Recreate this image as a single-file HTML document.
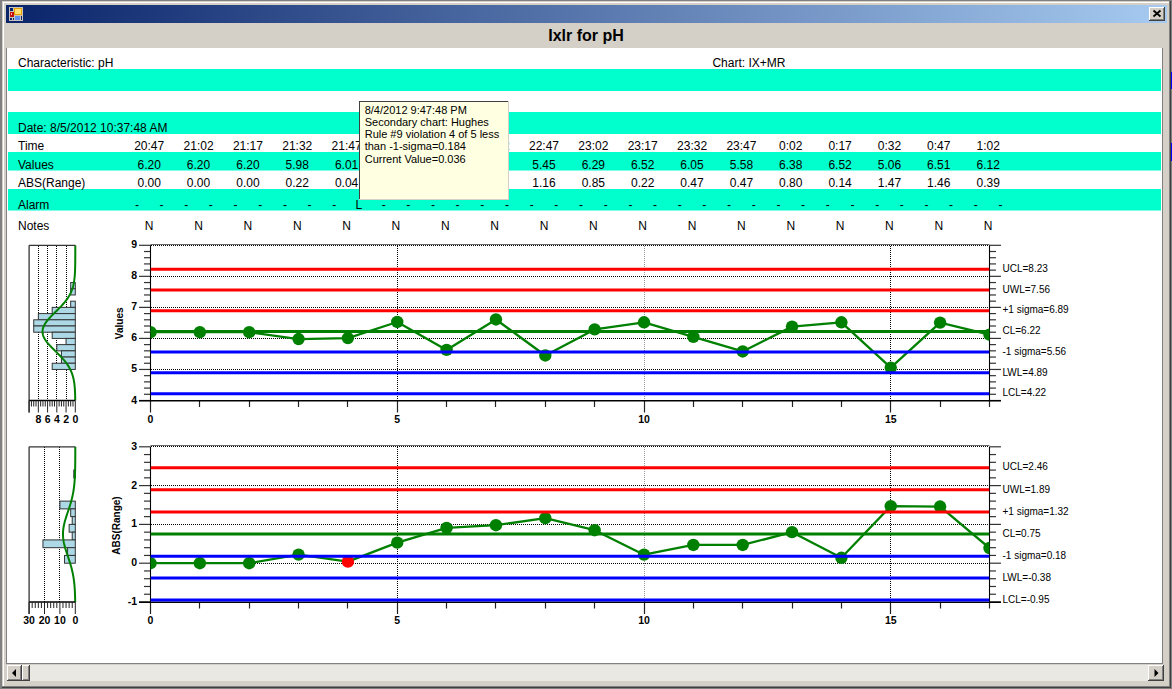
<!DOCTYPE html>
<html><head><meta charset="utf-8"><style>
html,body{margin:0;padding:0;width:1172px;height:689px;overflow:hidden;background:#d4d0c8;}
svg{display:block;}
text{font-family:"Liberation Sans", sans-serif;}
</style></head><body>
<svg width="1172" height="689" viewBox="0 0 1172 689">
<defs>
<linearGradient id="tg" x1="0" y1="0" x2="1" y2="0">
<stop offset="0" stop-color="#0a246a"/><stop offset="1" stop-color="#a6caf0"/>
</linearGradient>
<pattern id="chk" width="2" height="2" patternUnits="userSpaceOnUse">
<rect width="2" height="2" fill="#d4d0c8"/><rect width="1" height="1" fill="#fff"/><rect x="1" y="1" width="1" height="1" fill="#fff"/>
</pattern>
<clipPath id="c1"><rect x="150.5" y="237.3" width="838.95" height="171.2"/></clipPath>
<clipPath id="c2"><rect x="150.5" y="438.80000000000007" width="838.95" height="171.19999999999993"/></clipPath>
</defs>

<rect x="0" y="0" width="1172" height="689" fill="#d4d0c8"/>
<rect x="0" y="0" width="1172" height="689" fill="#808080"/>
<rect x="2" y="1" width="1169" height="687" fill="#404040"/>
<rect x="2" y="1" width="1168" height="686" fill="#808080"/>
<rect x="2" y="1" width="1167" height="685" fill="#d4d0c8"/>
<rect x="3" y="2" width="1166" height="684" fill="#ffffff"/>
<rect x="4" y="3" width="1165" height="683" fill="#d4d0c8"/>
<rect x="1171" y="72" width="1" height="17" fill="#0000ff"/>
<rect x="1171" y="143" width="1" height="18" fill="#0000ff"/>
<rect x="6" y="5" width="1161" height="18" fill="url(#tg)"/>
<g>
<rect x="9" y="7" width="14" height="14" fill="#c8c4bc"/>
<rect x="10" y="8" width="3" height="3" fill="#0a246a"/>
<rect x="14" y="8" width="8" height="7" fill="#e8a000"/>
<rect x="15" y="9" width="6" height="5" fill="#ffe070"/>
<rect x="10" y="12" width="4" height="5" fill="#c01010"/>
<rect x="11" y="13" width="1" height="2" fill="#ffb0b0"/>
<rect x="15" y="16" width="5" height="4" fill="#6090f0"/>
<rect x="10" y="18" width="2" height="2" fill="#0a246a"/>
<rect x="13" y="18" width="1" height="2" fill="#0a246a"/>
<rect x="21" y="16" width="1" height="4" fill="#0a246a"/>
</g>
<g>
<rect x="1149" y="7" width="16" height="14" fill="#404040"/>
<rect x="1149" y="7" width="15" height="13" fill="#ffffff"/>
<rect x="1150" y="8" width="14" height="12" fill="#808080"/>
<rect x="1150" y="8" width="13" height="11" fill="#d4d0c8"/>
<path d="M1153.5 10.5 L1160.5 16.5 M1160.5 10.5 L1153.5 16.5" stroke="#000" stroke-width="1.8" fill="none"/>
</g>
<text x="586" y="40.6" text-anchor="middle" font-size="16" font-weight="bold" fill="#000">Ixlr for pH</text>
<rect x="6" y="48" width="1157" height="616" fill="#808080"/>
<rect x="7" y="48" width="1155" height="615" fill="#ffffff"/>
<rect x="8" y="69" width="1153" height="22" fill="#00ffcc"/>
<rect x="8" y="112" width="1153" height="22" fill="#00ffcc"/>
<rect x="8" y="152" width="1153" height="18.5" fill="#00ffcc"/>
<rect x="8" y="189" width="1153" height="21.5" fill="#00ffcc"/>
<text x="18" y="66.8" font-size="12" text-anchor="start" font-weight="normal" fill="#000" >Characteristic: pH</text>
<text x="712.4" y="66.5" font-size="12" text-anchor="start" font-weight="normal" fill="#000" >Chart: IX+MR</text>
<text x="18" y="132" font-size="12" text-anchor="start" font-weight="normal" fill="#000" >Date: 8/5/2012 10:37:48 AM</text>
<text x="18" y="150" font-size="12" text-anchor="start" font-weight="normal" fill="#000" >Time</text>
<text x="18" y="169" font-size="12" text-anchor="start" font-weight="normal" fill="#000" >Values</text>
<text x="18" y="187" font-size="12" text-anchor="start" font-weight="normal" fill="#000" >ABS(Range)</text>
<text x="18" y="208.7" font-size="12" text-anchor="start" font-weight="normal" fill="#000" >Alarm</text>
<text x="18" y="229.6" font-size="12" text-anchor="start" font-weight="normal" fill="#000" >Notes</text>
<text x="149.2" y="150" font-size="12" text-anchor="middle" font-weight="normal" fill="#000" >20:47</text>
<text x="149.2" y="169" font-size="12" text-anchor="middle" font-weight="normal" fill="#000" >6.20</text>
<text x="149.2" y="187" font-size="12" text-anchor="middle" font-weight="normal" fill="#000" >0.00</text>
<text x="136.89999999999998" y="208.8" font-size="12" text-anchor="middle" font-weight="normal" fill="#000" >-</text>
<text x="161.5" y="208.8" font-size="12" text-anchor="middle" font-weight="normal" fill="#000" >-</text>
<text x="149.2" y="229.6" font-size="12" text-anchor="middle" font-weight="normal" fill="#000" >N</text>
<text x="198.54999999999998" y="150" font-size="12" text-anchor="middle" font-weight="normal" fill="#000" >21:02</text>
<text x="198.54999999999998" y="169" font-size="12" text-anchor="middle" font-weight="normal" fill="#000" >6.20</text>
<text x="198.54999999999998" y="187" font-size="12" text-anchor="middle" font-weight="normal" fill="#000" >0.00</text>
<text x="186.24999999999997" y="208.8" font-size="12" text-anchor="middle" font-weight="normal" fill="#000" >-</text>
<text x="210.85" y="208.8" font-size="12" text-anchor="middle" font-weight="normal" fill="#000" >-</text>
<text x="198.54999999999998" y="229.6" font-size="12" text-anchor="middle" font-weight="normal" fill="#000" >N</text>
<text x="247.89999999999998" y="150" font-size="12" text-anchor="middle" font-weight="normal" fill="#000" >21:17</text>
<text x="247.89999999999998" y="169" font-size="12" text-anchor="middle" font-weight="normal" fill="#000" >6.20</text>
<text x="247.89999999999998" y="187" font-size="12" text-anchor="middle" font-weight="normal" fill="#000" >0.00</text>
<text x="235.59999999999997" y="208.8" font-size="12" text-anchor="middle" font-weight="normal" fill="#000" >-</text>
<text x="260.2" y="208.8" font-size="12" text-anchor="middle" font-weight="normal" fill="#000" >-</text>
<text x="247.89999999999998" y="229.6" font-size="12" text-anchor="middle" font-weight="normal" fill="#000" >N</text>
<text x="297.25" y="150" font-size="12" text-anchor="middle" font-weight="normal" fill="#000" >21:32</text>
<text x="297.25" y="169" font-size="12" text-anchor="middle" font-weight="normal" fill="#000" >5.98</text>
<text x="297.25" y="187" font-size="12" text-anchor="middle" font-weight="normal" fill="#000" >0.22</text>
<text x="284.95" y="208.8" font-size="12" text-anchor="middle" font-weight="normal" fill="#000" >-</text>
<text x="309.55" y="208.8" font-size="12" text-anchor="middle" font-weight="normal" fill="#000" >-</text>
<text x="297.25" y="229.6" font-size="12" text-anchor="middle" font-weight="normal" fill="#000" >N</text>
<text x="346.59999999999997" y="150" font-size="12" text-anchor="middle" font-weight="normal" fill="#000" >21:47</text>
<text x="346.59999999999997" y="169" font-size="12" text-anchor="middle" font-weight="normal" fill="#000" >6.01</text>
<text x="346.59999999999997" y="187" font-size="12" text-anchor="middle" font-weight="normal" fill="#000" >0.04</text>
<text x="334.29999999999995" y="208.8" font-size="12" text-anchor="middle" font-weight="normal" fill="#000" >-</text>
<text x="358.9" y="208.8" font-size="12" text-anchor="middle" font-weight="normal" fill="#000" >L</text>
<text x="346.59999999999997" y="229.6" font-size="12" text-anchor="middle" font-weight="normal" fill="#000" >N</text>
<text x="395.95" y="150" font-size="12" text-anchor="middle" font-weight="normal" fill="#000" >22:02</text>
<text x="395.95" y="169" font-size="12" text-anchor="middle" font-weight="normal" fill="#000" >6.53</text>
<text x="395.95" y="187" font-size="12" text-anchor="middle" font-weight="normal" fill="#000" >0.53</text>
<text x="383.65" y="208.8" font-size="12" text-anchor="middle" font-weight="normal" fill="#000" >-</text>
<text x="408.25" y="208.8" font-size="12" text-anchor="middle" font-weight="normal" fill="#000" >-</text>
<text x="395.95" y="229.6" font-size="12" text-anchor="middle" font-weight="normal" fill="#000" >N</text>
<text x="445.3" y="150" font-size="12" text-anchor="middle" font-weight="normal" fill="#000" >22:17</text>
<text x="445.3" y="169" font-size="12" text-anchor="middle" font-weight="normal" fill="#000" >5.63</text>
<text x="445.3" y="187" font-size="12" text-anchor="middle" font-weight="normal" fill="#000" >0.91</text>
<text x="433.0" y="208.8" font-size="12" text-anchor="middle" font-weight="normal" fill="#000" >-</text>
<text x="457.6" y="208.8" font-size="12" text-anchor="middle" font-weight="normal" fill="#000" >-</text>
<text x="445.3" y="229.6" font-size="12" text-anchor="middle" font-weight="normal" fill="#000" >N</text>
<text x="494.65" y="150" font-size="12" text-anchor="middle" font-weight="normal" fill="#000" >22:32</text>
<text x="494.65" y="169" font-size="12" text-anchor="middle" font-weight="normal" fill="#000" >6.61</text>
<text x="494.65" y="187" font-size="12" text-anchor="middle" font-weight="normal" fill="#000" >0.98</text>
<text x="482.34999999999997" y="208.8" font-size="12" text-anchor="middle" font-weight="normal" fill="#000" >-</text>
<text x="506.95" y="208.8" font-size="12" text-anchor="middle" font-weight="normal" fill="#000" >-</text>
<text x="494.65" y="229.6" font-size="12" text-anchor="middle" font-weight="normal" fill="#000" >N</text>
<text x="544.0" y="150" font-size="12" text-anchor="middle" font-weight="normal" fill="#000" >22:47</text>
<text x="544.0" y="169" font-size="12" text-anchor="middle" font-weight="normal" fill="#000" >5.45</text>
<text x="544.0" y="187" font-size="12" text-anchor="middle" font-weight="normal" fill="#000" >1.16</text>
<text x="531.7" y="208.8" font-size="12" text-anchor="middle" font-weight="normal" fill="#000" >-</text>
<text x="556.3" y="208.8" font-size="12" text-anchor="middle" font-weight="normal" fill="#000" >-</text>
<text x="544.0" y="229.6" font-size="12" text-anchor="middle" font-weight="normal" fill="#000" >N</text>
<text x="593.3500000000001" y="150" font-size="12" text-anchor="middle" font-weight="normal" fill="#000" >23:02</text>
<text x="593.3500000000001" y="169" font-size="12" text-anchor="middle" font-weight="normal" fill="#000" >6.29</text>
<text x="593.3500000000001" y="187" font-size="12" text-anchor="middle" font-weight="normal" fill="#000" >0.85</text>
<text x="581.0500000000002" y="208.8" font-size="12" text-anchor="middle" font-weight="normal" fill="#000" >-</text>
<text x="605.6500000000001" y="208.8" font-size="12" text-anchor="middle" font-weight="normal" fill="#000" >-</text>
<text x="593.3500000000001" y="229.6" font-size="12" text-anchor="middle" font-weight="normal" fill="#000" >N</text>
<text x="642.7" y="150" font-size="12" text-anchor="middle" font-weight="normal" fill="#000" >23:17</text>
<text x="642.7" y="169" font-size="12" text-anchor="middle" font-weight="normal" fill="#000" >6.52</text>
<text x="642.7" y="187" font-size="12" text-anchor="middle" font-weight="normal" fill="#000" >0.22</text>
<text x="630.4000000000001" y="208.8" font-size="12" text-anchor="middle" font-weight="normal" fill="#000" >-</text>
<text x="655.0" y="208.8" font-size="12" text-anchor="middle" font-weight="normal" fill="#000" >-</text>
<text x="642.7" y="229.6" font-size="12" text-anchor="middle" font-weight="normal" fill="#000" >N</text>
<text x="692.0500000000001" y="150" font-size="12" text-anchor="middle" font-weight="normal" fill="#000" >23:32</text>
<text x="692.0500000000001" y="169" font-size="12" text-anchor="middle" font-weight="normal" fill="#000" >6.05</text>
<text x="692.0500000000001" y="187" font-size="12" text-anchor="middle" font-weight="normal" fill="#000" >0.47</text>
<text x="679.7500000000001" y="208.8" font-size="12" text-anchor="middle" font-weight="normal" fill="#000" >-</text>
<text x="704.35" y="208.8" font-size="12" text-anchor="middle" font-weight="normal" fill="#000" >-</text>
<text x="692.0500000000001" y="229.6" font-size="12" text-anchor="middle" font-weight="normal" fill="#000" >N</text>
<text x="741.4000000000001" y="150" font-size="12" text-anchor="middle" font-weight="normal" fill="#000" >23:47</text>
<text x="741.4000000000001" y="169" font-size="12" text-anchor="middle" font-weight="normal" fill="#000" >5.58</text>
<text x="741.4000000000001" y="187" font-size="12" text-anchor="middle" font-weight="normal" fill="#000" >0.47</text>
<text x="729.1000000000001" y="208.8" font-size="12" text-anchor="middle" font-weight="normal" fill="#000" >-</text>
<text x="753.7" y="208.8" font-size="12" text-anchor="middle" font-weight="normal" fill="#000" >-</text>
<text x="741.4000000000001" y="229.6" font-size="12" text-anchor="middle" font-weight="normal" fill="#000" >N</text>
<text x="790.7500000000001" y="150" font-size="12" text-anchor="middle" font-weight="normal" fill="#000" >0:02</text>
<text x="790.7500000000001" y="169" font-size="12" text-anchor="middle" font-weight="normal" fill="#000" >6.38</text>
<text x="790.7500000000001" y="187" font-size="12" text-anchor="middle" font-weight="normal" fill="#000" >0.80</text>
<text x="778.4500000000002" y="208.8" font-size="12" text-anchor="middle" font-weight="normal" fill="#000" >-</text>
<text x="803.0500000000001" y="208.8" font-size="12" text-anchor="middle" font-weight="normal" fill="#000" >-</text>
<text x="790.7500000000001" y="229.6" font-size="12" text-anchor="middle" font-weight="normal" fill="#000" >N</text>
<text x="840.1" y="150" font-size="12" text-anchor="middle" font-weight="normal" fill="#000" >0:17</text>
<text x="840.1" y="169" font-size="12" text-anchor="middle" font-weight="normal" fill="#000" >6.52</text>
<text x="840.1" y="187" font-size="12" text-anchor="middle" font-weight="normal" fill="#000" >0.14</text>
<text x="827.8000000000001" y="208.8" font-size="12" text-anchor="middle" font-weight="normal" fill="#000" >-</text>
<text x="852.4" y="208.8" font-size="12" text-anchor="middle" font-weight="normal" fill="#000" >-</text>
<text x="840.1" y="229.6" font-size="12" text-anchor="middle" font-weight="normal" fill="#000" >N</text>
<text x="889.45" y="150" font-size="12" text-anchor="middle" font-weight="normal" fill="#000" >0:32</text>
<text x="889.45" y="169" font-size="12" text-anchor="middle" font-weight="normal" fill="#000" >5.06</text>
<text x="889.45" y="187" font-size="12" text-anchor="middle" font-weight="normal" fill="#000" >1.47</text>
<text x="877.1500000000001" y="208.8" font-size="12" text-anchor="middle" font-weight="normal" fill="#000" >-</text>
<text x="901.75" y="208.8" font-size="12" text-anchor="middle" font-weight="normal" fill="#000" >-</text>
<text x="889.45" y="229.6" font-size="12" text-anchor="middle" font-weight="normal" fill="#000" >N</text>
<text x="938.8000000000001" y="150" font-size="12" text-anchor="middle" font-weight="normal" fill="#000" >0:47</text>
<text x="938.8000000000001" y="169" font-size="12" text-anchor="middle" font-weight="normal" fill="#000" >6.51</text>
<text x="938.8000000000001" y="187" font-size="12" text-anchor="middle" font-weight="normal" fill="#000" >1.46</text>
<text x="926.5000000000001" y="208.8" font-size="12" text-anchor="middle" font-weight="normal" fill="#000" >-</text>
<text x="951.1" y="208.8" font-size="12" text-anchor="middle" font-weight="normal" fill="#000" >-</text>
<text x="938.8000000000001" y="229.6" font-size="12" text-anchor="middle" font-weight="normal" fill="#000" >N</text>
<text x="988.1500000000001" y="150" font-size="12" text-anchor="middle" font-weight="normal" fill="#000" >1:02</text>
<text x="988.1500000000001" y="169" font-size="12" text-anchor="middle" font-weight="normal" fill="#000" >6.12</text>
<text x="988.1500000000001" y="187" font-size="12" text-anchor="middle" font-weight="normal" fill="#000" >0.39</text>
<text x="975.8500000000001" y="208.8" font-size="12" text-anchor="middle" font-weight="normal" fill="#000" >-</text>
<text x="1000.45" y="208.8" font-size="12" text-anchor="middle" font-weight="normal" fill="#000" >-</text>
<text x="988.1500000000001" y="229.6" font-size="12" text-anchor="middle" font-weight="normal" fill="#000" >N</text>
<line x1="151" y1="369.5" x2="989" y2="369.5" stroke="#000" stroke-width="1" stroke-dasharray="1,1"/>
<line x1="151" y1="338.5" x2="989" y2="338.5" stroke="#000" stroke-width="1" stroke-dasharray="1,1"/>
<line x1="151" y1="307.5" x2="989" y2="307.5" stroke="#000" stroke-width="1" stroke-dasharray="1,1"/>
<line x1="151" y1="276.5" x2="989" y2="276.5" stroke="#000" stroke-width="1" stroke-dasharray="1,1"/>
<line x1="151" y1="245.5" x2="989" y2="245.5" stroke="#000" stroke-width="1" stroke-dasharray="1,1"/>
<line x1="150.5" y1="244.5" x2="989.45" y2="244.5" stroke="#666" stroke-width="1"/>
<line x1="397.5" y1="246" x2="397.5" y2="400" stroke="#000" stroke-width="1" stroke-dasharray="1,1"/>
<line x1="644.5" y1="246" x2="644.5" y2="400" stroke="#999" stroke-width="1" stroke-dasharray="1,1"/>
<line x1="890.5" y1="246" x2="890.5" y2="400" stroke="#000" stroke-width="1" stroke-dasharray="1,1"/>
<line x1="139.0" y1="400.5" x2="150.5" y2="400.5" stroke="#333" stroke-width="1.2"/>
<line x1="989.45" y1="400.5" x2="1000.95" y2="400.5" stroke="#333" stroke-width="1.2"/>
<line x1="144.0" y1="394.292" x2="150.5" y2="394.292" stroke="#333" stroke-width="1.2"/>
<line x1="989.45" y1="394.292" x2="995.95" y2="394.292" stroke="#333" stroke-width="1.2"/>
<line x1="144.0" y1="388.084" x2="150.5" y2="388.084" stroke="#333" stroke-width="1.2"/>
<line x1="989.45" y1="388.084" x2="995.95" y2="388.084" stroke="#333" stroke-width="1.2"/>
<line x1="144.0" y1="381.87600000000003" x2="150.5" y2="381.87600000000003" stroke="#333" stroke-width="1.2"/>
<line x1="989.45" y1="381.87600000000003" x2="995.95" y2="381.87600000000003" stroke="#333" stroke-width="1.2"/>
<line x1="144.0" y1="375.668" x2="150.5" y2="375.668" stroke="#333" stroke-width="1.2"/>
<line x1="989.45" y1="375.668" x2="995.95" y2="375.668" stroke="#333" stroke-width="1.2"/>
<line x1="139.0" y1="369.46" x2="150.5" y2="369.46" stroke="#333" stroke-width="1.2"/>
<line x1="989.45" y1="369.46" x2="1000.95" y2="369.46" stroke="#333" stroke-width="1.2"/>
<line x1="144.0" y1="363.252" x2="150.5" y2="363.252" stroke="#333" stroke-width="1.2"/>
<line x1="989.45" y1="363.252" x2="995.95" y2="363.252" stroke="#333" stroke-width="1.2"/>
<line x1="144.0" y1="357.044" x2="150.5" y2="357.044" stroke="#333" stroke-width="1.2"/>
<line x1="989.45" y1="357.044" x2="995.95" y2="357.044" stroke="#333" stroke-width="1.2"/>
<line x1="144.0" y1="350.836" x2="150.5" y2="350.836" stroke="#333" stroke-width="1.2"/>
<line x1="989.45" y1="350.836" x2="995.95" y2="350.836" stroke="#333" stroke-width="1.2"/>
<line x1="144.0" y1="344.628" x2="150.5" y2="344.628" stroke="#333" stroke-width="1.2"/>
<line x1="989.45" y1="344.628" x2="995.95" y2="344.628" stroke="#333" stroke-width="1.2"/>
<line x1="139.0" y1="338.42" x2="150.5" y2="338.42" stroke="#333" stroke-width="1.2"/>
<line x1="989.45" y1="338.42" x2="1000.95" y2="338.42" stroke="#333" stroke-width="1.2"/>
<line x1="144.0" y1="332.212" x2="150.5" y2="332.212" stroke="#333" stroke-width="1.2"/>
<line x1="989.45" y1="332.212" x2="995.95" y2="332.212" stroke="#333" stroke-width="1.2"/>
<line x1="144.0" y1="326.004" x2="150.5" y2="326.004" stroke="#333" stroke-width="1.2"/>
<line x1="989.45" y1="326.004" x2="995.95" y2="326.004" stroke="#333" stroke-width="1.2"/>
<line x1="144.0" y1="319.796" x2="150.5" y2="319.796" stroke="#333" stroke-width="1.2"/>
<line x1="989.45" y1="319.796" x2="995.95" y2="319.796" stroke="#333" stroke-width="1.2"/>
<line x1="144.0" y1="313.58799999999997" x2="150.5" y2="313.58799999999997" stroke="#333" stroke-width="1.2"/>
<line x1="989.45" y1="313.58799999999997" x2="995.95" y2="313.58799999999997" stroke="#333" stroke-width="1.2"/>
<line x1="139.0" y1="307.38" x2="150.5" y2="307.38" stroke="#333" stroke-width="1.2"/>
<line x1="989.45" y1="307.38" x2="1000.95" y2="307.38" stroke="#333" stroke-width="1.2"/>
<line x1="144.0" y1="301.172" x2="150.5" y2="301.172" stroke="#333" stroke-width="1.2"/>
<line x1="989.45" y1="301.172" x2="995.95" y2="301.172" stroke="#333" stroke-width="1.2"/>
<line x1="144.0" y1="294.964" x2="150.5" y2="294.964" stroke="#333" stroke-width="1.2"/>
<line x1="989.45" y1="294.964" x2="995.95" y2="294.964" stroke="#333" stroke-width="1.2"/>
<line x1="144.0" y1="288.75600000000003" x2="150.5" y2="288.75600000000003" stroke="#333" stroke-width="1.2"/>
<line x1="989.45" y1="288.75600000000003" x2="995.95" y2="288.75600000000003" stroke="#333" stroke-width="1.2"/>
<line x1="144.0" y1="282.548" x2="150.5" y2="282.548" stroke="#333" stroke-width="1.2"/>
<line x1="989.45" y1="282.548" x2="995.95" y2="282.548" stroke="#333" stroke-width="1.2"/>
<line x1="139.0" y1="276.34000000000003" x2="150.5" y2="276.34000000000003" stroke="#333" stroke-width="1.2"/>
<line x1="989.45" y1="276.34000000000003" x2="1000.95" y2="276.34000000000003" stroke="#333" stroke-width="1.2"/>
<line x1="144.0" y1="270.13200000000006" x2="150.5" y2="270.13200000000006" stroke="#333" stroke-width="1.2"/>
<line x1="989.45" y1="270.13200000000006" x2="995.95" y2="270.13200000000006" stroke="#333" stroke-width="1.2"/>
<line x1="144.0" y1="263.924" x2="150.5" y2="263.924" stroke="#333" stroke-width="1.2"/>
<line x1="989.45" y1="263.924" x2="995.95" y2="263.924" stroke="#333" stroke-width="1.2"/>
<line x1="144.0" y1="257.71599999999995" x2="150.5" y2="257.71599999999995" stroke="#333" stroke-width="1.2"/>
<line x1="989.45" y1="257.71599999999995" x2="995.95" y2="257.71599999999995" stroke="#333" stroke-width="1.2"/>
<line x1="144.0" y1="251.50799999999998" x2="150.5" y2="251.50799999999998" stroke="#333" stroke-width="1.2"/>
<line x1="989.45" y1="251.50799999999998" x2="995.95" y2="251.50799999999998" stroke="#333" stroke-width="1.2"/>
<line x1="139.0" y1="245.3" x2="150.5" y2="245.3" stroke="#333" stroke-width="1.2"/>
<line x1="989.45" y1="245.3" x2="1000.95" y2="245.3" stroke="#333" stroke-width="1.2"/>
<line x1="150.5" y1="400.5" x2="150.5" y2="412.5" stroke="#222" stroke-width="1.2"/>
<line x1="199.5" y1="400.5" x2="199.5" y2="407.0" stroke="#222" stroke-width="1.2"/>
<line x1="249.5" y1="400.5" x2="249.5" y2="407.0" stroke="#222" stroke-width="1.2"/>
<line x1="298.5" y1="400.5" x2="298.5" y2="407.0" stroke="#222" stroke-width="1.2"/>
<line x1="347.5" y1="400.5" x2="347.5" y2="407.0" stroke="#222" stroke-width="1.2"/>
<line x1="397.5" y1="400.5" x2="397.5" y2="412.5" stroke="#222" stroke-width="1.2"/>
<line x1="446.5" y1="400.5" x2="446.5" y2="407.0" stroke="#222" stroke-width="1.2"/>
<line x1="495.5" y1="400.5" x2="495.5" y2="407.0" stroke="#222" stroke-width="1.2"/>
<line x1="545.5" y1="400.5" x2="545.5" y2="407.0" stroke="#222" stroke-width="1.2"/>
<line x1="594.5" y1="400.5" x2="594.5" y2="407.0" stroke="#222" stroke-width="1.2"/>
<line x1="644.5" y1="400.5" x2="644.5" y2="412.5" stroke="#222" stroke-width="1.2"/>
<line x1="693.5" y1="400.5" x2="693.5" y2="407.0" stroke="#222" stroke-width="1.2"/>
<line x1="742.5" y1="400.5" x2="742.5" y2="407.0" stroke="#222" stroke-width="1.2"/>
<line x1="792.5" y1="400.5" x2="792.5" y2="407.0" stroke="#222" stroke-width="1.2"/>
<line x1="841.5" y1="400.5" x2="841.5" y2="407.0" stroke="#222" stroke-width="1.2"/>
<line x1="890.5" y1="400.5" x2="890.5" y2="412.5" stroke="#222" stroke-width="1.2"/>
<line x1="940.5" y1="400.5" x2="940.5" y2="407.0" stroke="#222" stroke-width="1.2"/>
<line x1="989.5" y1="400.5" x2="989.5" y2="407.0" stroke="#222" stroke-width="1.2"/>
<line x1="150.5" y1="245.3" x2="150.5" y2="400.5" stroke="#000" stroke-width="1.1"/>
<line x1="989.5" y1="245.3" x2="989.5" y2="400.5" stroke="#000" stroke-width="1.1"/>
<line x1="139.0" y1="400.7" x2="1000.95" y2="400.7" stroke="#000" stroke-width="1.5"/>
<g clip-path="url(#c1)">
<polyline points="150.50,332.21 199.85,332.21 249.20,332.21 298.55,339.04 347.90,338.11 397.25,321.97 446.60,349.90 495.95,319.49 545.30,355.49 594.65,329.42 644.00,322.28 693.35,336.87 742.70,351.46 792.05,326.62 841.40,322.28 890.75,367.60 940.10,322.59 989.45,334.70" fill="none" stroke="#008000" stroke-width="2.3" stroke-linejoin="round"/>
<circle cx="150.50" cy="332.21" r="6.2" fill="#008000"/>
<circle cx="199.85" cy="332.21" r="6.2" fill="#008000"/>
<circle cx="249.20" cy="332.21" r="6.2" fill="#008000"/>
<circle cx="298.55" cy="339.04" r="6.2" fill="#008000"/>
<circle cx="347.90" cy="338.11" r="6.2" fill="#008000"/>
<circle cx="397.25" cy="321.97" r="6.2" fill="#008000"/>
<circle cx="446.60" cy="349.90" r="6.2" fill="#008000"/>
<circle cx="495.95" cy="319.49" r="6.2" fill="#008000"/>
<circle cx="545.30" cy="355.49" r="6.2" fill="#008000"/>
<circle cx="594.65" cy="329.42" r="6.2" fill="#008000"/>
<circle cx="644.00" cy="322.28" r="6.2" fill="#008000"/>
<circle cx="693.35" cy="336.87" r="6.2" fill="#008000"/>
<circle cx="742.70" cy="351.46" r="6.2" fill="#008000"/>
<circle cx="792.05" cy="326.62" r="6.2" fill="#008000"/>
<circle cx="841.40" cy="322.28" r="6.2" fill="#008000"/>
<circle cx="890.75" cy="367.60" r="6.2" fill="#008000"/>
<circle cx="940.10" cy="322.59" r="6.2" fill="#008000"/>
<circle cx="989.45" cy="334.70" r="6.2" fill="#008000"/>
<line x1="150.5" y1="269.20" x2="989.45" y2="269.20" stroke="#ff0000" stroke-width="3"/>
<line x1="150.5" y1="290.00" x2="989.45" y2="290.00" stroke="#ff0000" stroke-width="3"/>
<line x1="150.5" y1="310.79" x2="989.45" y2="310.79" stroke="#ff0000" stroke-width="3"/>
<line x1="150.5" y1="331.59" x2="989.45" y2="331.59" stroke="#008000" stroke-width="3"/>
<line x1="150.5" y1="352.08" x2="989.45" y2="352.08" stroke="#0000ff" stroke-width="3"/>
<line x1="150.5" y1="372.87" x2="989.45" y2="372.87" stroke="#0000ff" stroke-width="3"/>
<line x1="150.5" y1="393.67" x2="989.45" y2="393.67" stroke="#0000ff" stroke-width="3"/>
</g>
<text x="1002.5" y="271.90079999999995" font-size="10" text-anchor="start" font-weight="normal" fill="#000" >UCL=8.23</text>
<text x="1002.5" y="292.6976" font-size="10" text-anchor="start" font-weight="normal" fill="#000" >UWL=7.56</text>
<text x="1002.5" y="313.4944" font-size="10" text-anchor="start" font-weight="normal" fill="#000" >+1 sigma=6.89</text>
<text x="1002.5" y="334.2912" font-size="10" text-anchor="start" font-weight="normal" fill="#000" >CL=6.22</text>
<text x="1002.5" y="354.7776" font-size="10" text-anchor="start" font-weight="normal" fill="#000" >-1 sigma=5.56</text>
<text x="1002.5" y="375.5744" font-size="10" text-anchor="start" font-weight="normal" fill="#000" >LWL=4.89</text>
<text x="1002.5" y="396.3712" font-size="10" text-anchor="start" font-weight="normal" fill="#000" >LCL=4.22</text>
<text x="137" y="403.5" font-size="10.5" text-anchor="end" font-weight="bold" fill="#000" >4</text>
<text x="137" y="372.46" font-size="10.5" text-anchor="end" font-weight="bold" fill="#000" >5</text>
<text x="137" y="341.42" font-size="10.5" text-anchor="end" font-weight="bold" fill="#000" >6</text>
<text x="137" y="310.38" font-size="10.5" text-anchor="end" font-weight="bold" fill="#000" >7</text>
<text x="137" y="279.34000000000003" font-size="10.5" text-anchor="end" font-weight="bold" fill="#000" >8</text>
<text x="137" y="248.3" font-size="10.5" text-anchor="end" font-weight="bold" fill="#000" >9</text>
<text x="150.5" y="422.8" font-size="10.5" text-anchor="middle" font-weight="bold" fill="#000" >0</text>
<text x="397.25" y="422.8" font-size="10.5" text-anchor="middle" font-weight="bold" fill="#000" >5</text>
<text x="644.0" y="422.8" font-size="10.5" text-anchor="middle" font-weight="bold" fill="#000" >10</text>
<text x="890.75" y="422.8" font-size="10.5" text-anchor="middle" font-weight="bold" fill="#000" >15</text>
<text x="0" y="0" font-size="10" font-weight="bold" text-anchor="middle" transform="translate(122.9,323.3) rotate(-90)">Values</text>
<line x1="151" y1="563.5" x2="989" y2="563.5" stroke="#000" stroke-width="1" stroke-dasharray="1,1"/>
<line x1="151" y1="524.5" x2="989" y2="524.5" stroke="#000" stroke-width="1" stroke-dasharray="1,1"/>
<line x1="151" y1="485.5" x2="989" y2="485.5" stroke="#000" stroke-width="1" stroke-dasharray="1,1"/>
<line x1="151" y1="446.5" x2="989" y2="446.5" stroke="#000" stroke-width="1" stroke-dasharray="1,1"/>
<line x1="150.5" y1="445.5" x2="989.45" y2="445.5" stroke="#666" stroke-width="1"/>
<line x1="397.5" y1="447" x2="397.5" y2="602" stroke="#000" stroke-width="1" stroke-dasharray="1,1"/>
<line x1="644.5" y1="447" x2="644.5" y2="602" stroke="#999" stroke-width="1" stroke-dasharray="1,1"/>
<line x1="890.5" y1="447" x2="890.5" y2="602" stroke="#000" stroke-width="1" stroke-dasharray="1,1"/>
<line x1="139.0" y1="602.0" x2="150.5" y2="602.0" stroke="#333" stroke-width="1.2"/>
<line x1="989.45" y1="602.0" x2="1000.95" y2="602.0" stroke="#333" stroke-width="1.2"/>
<line x1="144.0" y1="594.24" x2="150.5" y2="594.24" stroke="#333" stroke-width="1.2"/>
<line x1="989.45" y1="594.24" x2="995.95" y2="594.24" stroke="#333" stroke-width="1.2"/>
<line x1="144.0" y1="586.48" x2="150.5" y2="586.48" stroke="#333" stroke-width="1.2"/>
<line x1="989.45" y1="586.48" x2="995.95" y2="586.48" stroke="#333" stroke-width="1.2"/>
<line x1="144.0" y1="578.72" x2="150.5" y2="578.72" stroke="#333" stroke-width="1.2"/>
<line x1="989.45" y1="578.72" x2="995.95" y2="578.72" stroke="#333" stroke-width="1.2"/>
<line x1="144.0" y1="570.96" x2="150.5" y2="570.96" stroke="#333" stroke-width="1.2"/>
<line x1="989.45" y1="570.96" x2="995.95" y2="570.96" stroke="#333" stroke-width="1.2"/>
<line x1="139.0" y1="563.2" x2="150.5" y2="563.2" stroke="#333" stroke-width="1.2"/>
<line x1="989.45" y1="563.2" x2="1000.95" y2="563.2" stroke="#333" stroke-width="1.2"/>
<line x1="144.0" y1="555.44" x2="150.5" y2="555.44" stroke="#333" stroke-width="1.2"/>
<line x1="989.45" y1="555.44" x2="995.95" y2="555.44" stroke="#333" stroke-width="1.2"/>
<line x1="144.0" y1="547.6800000000001" x2="150.5" y2="547.6800000000001" stroke="#333" stroke-width="1.2"/>
<line x1="989.45" y1="547.6800000000001" x2="995.95" y2="547.6800000000001" stroke="#333" stroke-width="1.2"/>
<line x1="144.0" y1="539.9200000000001" x2="150.5" y2="539.9200000000001" stroke="#333" stroke-width="1.2"/>
<line x1="989.45" y1="539.9200000000001" x2="995.95" y2="539.9200000000001" stroke="#333" stroke-width="1.2"/>
<line x1="144.0" y1="532.1600000000001" x2="150.5" y2="532.1600000000001" stroke="#333" stroke-width="1.2"/>
<line x1="989.45" y1="532.1600000000001" x2="995.95" y2="532.1600000000001" stroke="#333" stroke-width="1.2"/>
<line x1="139.0" y1="524.4000000000001" x2="150.5" y2="524.4000000000001" stroke="#333" stroke-width="1.2"/>
<line x1="989.45" y1="524.4000000000001" x2="1000.95" y2="524.4000000000001" stroke="#333" stroke-width="1.2"/>
<line x1="144.0" y1="516.6400000000001" x2="150.5" y2="516.6400000000001" stroke="#333" stroke-width="1.2"/>
<line x1="989.45" y1="516.6400000000001" x2="995.95" y2="516.6400000000001" stroke="#333" stroke-width="1.2"/>
<line x1="144.0" y1="508.88000000000005" x2="150.5" y2="508.88000000000005" stroke="#333" stroke-width="1.2"/>
<line x1="989.45" y1="508.88000000000005" x2="995.95" y2="508.88000000000005" stroke="#333" stroke-width="1.2"/>
<line x1="144.0" y1="501.12000000000006" x2="150.5" y2="501.12000000000006" stroke="#333" stroke-width="1.2"/>
<line x1="989.45" y1="501.12000000000006" x2="995.95" y2="501.12000000000006" stroke="#333" stroke-width="1.2"/>
<line x1="144.0" y1="493.36" x2="150.5" y2="493.36" stroke="#333" stroke-width="1.2"/>
<line x1="989.45" y1="493.36" x2="995.95" y2="493.36" stroke="#333" stroke-width="1.2"/>
<line x1="139.0" y1="485.6" x2="150.5" y2="485.6" stroke="#333" stroke-width="1.2"/>
<line x1="989.45" y1="485.6" x2="1000.95" y2="485.6" stroke="#333" stroke-width="1.2"/>
<line x1="144.0" y1="477.84000000000003" x2="150.5" y2="477.84000000000003" stroke="#333" stroke-width="1.2"/>
<line x1="989.45" y1="477.84000000000003" x2="995.95" y2="477.84000000000003" stroke="#333" stroke-width="1.2"/>
<line x1="144.0" y1="470.08000000000004" x2="150.5" y2="470.08000000000004" stroke="#333" stroke-width="1.2"/>
<line x1="989.45" y1="470.08000000000004" x2="995.95" y2="470.08000000000004" stroke="#333" stroke-width="1.2"/>
<line x1="144.0" y1="462.32000000000005" x2="150.5" y2="462.32000000000005" stroke="#333" stroke-width="1.2"/>
<line x1="989.45" y1="462.32000000000005" x2="995.95" y2="462.32000000000005" stroke="#333" stroke-width="1.2"/>
<line x1="144.0" y1="454.56000000000006" x2="150.5" y2="454.56000000000006" stroke="#333" stroke-width="1.2"/>
<line x1="989.45" y1="454.56000000000006" x2="995.95" y2="454.56000000000006" stroke="#333" stroke-width="1.2"/>
<line x1="139.0" y1="446.80000000000007" x2="150.5" y2="446.80000000000007" stroke="#333" stroke-width="1.2"/>
<line x1="989.45" y1="446.80000000000007" x2="1000.95" y2="446.80000000000007" stroke="#333" stroke-width="1.2"/>
<line x1="150.5" y1="602.0" x2="150.5" y2="614.0" stroke="#222" stroke-width="1.2"/>
<line x1="199.5" y1="602.0" x2="199.5" y2="608.5" stroke="#222" stroke-width="1.2"/>
<line x1="249.5" y1="602.0" x2="249.5" y2="608.5" stroke="#222" stroke-width="1.2"/>
<line x1="298.5" y1="602.0" x2="298.5" y2="608.5" stroke="#222" stroke-width="1.2"/>
<line x1="347.5" y1="602.0" x2="347.5" y2="608.5" stroke="#222" stroke-width="1.2"/>
<line x1="397.5" y1="602.0" x2="397.5" y2="614.0" stroke="#222" stroke-width="1.2"/>
<line x1="446.5" y1="602.0" x2="446.5" y2="608.5" stroke="#222" stroke-width="1.2"/>
<line x1="495.5" y1="602.0" x2="495.5" y2="608.5" stroke="#222" stroke-width="1.2"/>
<line x1="545.5" y1="602.0" x2="545.5" y2="608.5" stroke="#222" stroke-width="1.2"/>
<line x1="594.5" y1="602.0" x2="594.5" y2="608.5" stroke="#222" stroke-width="1.2"/>
<line x1="644.5" y1="602.0" x2="644.5" y2="614.0" stroke="#222" stroke-width="1.2"/>
<line x1="693.5" y1="602.0" x2="693.5" y2="608.5" stroke="#222" stroke-width="1.2"/>
<line x1="742.5" y1="602.0" x2="742.5" y2="608.5" stroke="#222" stroke-width="1.2"/>
<line x1="792.5" y1="602.0" x2="792.5" y2="608.5" stroke="#222" stroke-width="1.2"/>
<line x1="841.5" y1="602.0" x2="841.5" y2="608.5" stroke="#222" stroke-width="1.2"/>
<line x1="890.5" y1="602.0" x2="890.5" y2="614.0" stroke="#222" stroke-width="1.2"/>
<line x1="940.5" y1="602.0" x2="940.5" y2="608.5" stroke="#222" stroke-width="1.2"/>
<line x1="989.5" y1="602.0" x2="989.5" y2="608.5" stroke="#222" stroke-width="1.2"/>
<line x1="150.5" y1="446.80000000000007" x2="150.5" y2="602.0" stroke="#000" stroke-width="1.1"/>
<line x1="989.5" y1="446.80000000000007" x2="989.5" y2="602.0" stroke="#000" stroke-width="1.1"/>
<line x1="139.0" y1="602.2" x2="1000.95" y2="602.2" stroke="#000" stroke-width="1.5"/>
<g clip-path="url(#c2)">
<polyline points="150.50,563.20 199.85,563.20 249.20,563.20 298.55,554.66 347.90,561.65 397.25,542.64 446.60,527.89 495.95,525.18 545.30,518.19 594.65,530.22 644.00,554.66 693.35,544.96 742.70,544.96 792.05,532.16 841.40,557.77 890.75,506.16 940.10,506.55 989.45,548.07" fill="none" stroke="#008000" stroke-width="2.3" stroke-linejoin="round"/>
<circle cx="150.50" cy="563.20" r="6.2" fill="#008000"/>
<circle cx="199.85" cy="563.20" r="6.2" fill="#008000"/>
<circle cx="249.20" cy="563.20" r="6.2" fill="#008000"/>
<circle cx="298.55" cy="554.66" r="6.2" fill="#008000"/>
<circle cx="347.90" cy="561.65" r="6.2" fill="#ff0000"/>
<circle cx="397.25" cy="542.64" r="6.2" fill="#008000"/>
<circle cx="446.60" cy="527.89" r="6.2" fill="#008000"/>
<circle cx="495.95" cy="525.18" r="6.2" fill="#008000"/>
<circle cx="545.30" cy="518.19" r="6.2" fill="#008000"/>
<circle cx="594.65" cy="530.22" r="6.2" fill="#008000"/>
<circle cx="644.00" cy="554.66" r="6.2" fill="#008000"/>
<circle cx="693.35" cy="544.96" r="6.2" fill="#008000"/>
<circle cx="742.70" cy="544.96" r="6.2" fill="#008000"/>
<circle cx="792.05" cy="532.16" r="6.2" fill="#008000"/>
<circle cx="841.40" cy="557.77" r="6.2" fill="#008000"/>
<circle cx="890.75" cy="506.16" r="6.2" fill="#008000"/>
<circle cx="940.10" cy="506.55" r="6.2" fill="#008000"/>
<circle cx="989.45" cy="548.07" r="6.2" fill="#008000"/>
<line x1="150.5" y1="467.75" x2="989.45" y2="467.75" stroke="#ff0000" stroke-width="3"/>
<line x1="150.5" y1="489.87" x2="989.45" y2="489.87" stroke="#ff0000" stroke-width="3"/>
<line x1="150.5" y1="511.98" x2="989.45" y2="511.98" stroke="#ff0000" stroke-width="3"/>
<line x1="150.5" y1="534.10" x2="989.45" y2="534.10" stroke="#008000" stroke-width="3"/>
<line x1="150.5" y1="556.22" x2="989.45" y2="556.22" stroke="#0000ff" stroke-width="3"/>
<line x1="150.5" y1="577.94" x2="989.45" y2="577.94" stroke="#0000ff" stroke-width="3"/>
<line x1="150.5" y1="600.06" x2="989.45" y2="600.06" stroke="#0000ff" stroke-width="3"/>
</g>
<text x="1002.5" y="470.45200000000006" font-size="10" text-anchor="start" font-weight="normal" fill="#000" >UCL=2.46</text>
<text x="1002.5" y="492.56800000000004" font-size="10" text-anchor="start" font-weight="normal" fill="#000" >UWL=1.89</text>
<text x="1002.5" y="514.6840000000001" font-size="10" text-anchor="start" font-weight="normal" fill="#000" >+1 sigma=1.32</text>
<text x="1002.5" y="536.8000000000001" font-size="10" text-anchor="start" font-weight="normal" fill="#000" >CL=0.75</text>
<text x="1002.5" y="558.916" font-size="10" text-anchor="start" font-weight="normal" fill="#000" >-1 sigma=0.18</text>
<text x="1002.5" y="580.6440000000001" font-size="10" text-anchor="start" font-weight="normal" fill="#000" >LWL=-0.38</text>
<text x="1002.5" y="602.7600000000001" font-size="10" text-anchor="start" font-weight="normal" fill="#000" >LCL=-0.95</text>
<text x="137" y="605.0" font-size="10.5" text-anchor="end" font-weight="bold" fill="#000" >-1</text>
<text x="137" y="566.2" font-size="10.5" text-anchor="end" font-weight="bold" fill="#000" >0</text>
<text x="137" y="527.4000000000001" font-size="10.5" text-anchor="end" font-weight="bold" fill="#000" >1</text>
<text x="137" y="488.6" font-size="10.5" text-anchor="end" font-weight="bold" fill="#000" >2</text>
<text x="137" y="449.80000000000007" font-size="10.5" text-anchor="end" font-weight="bold" fill="#000" >3</text>
<text x="150.5" y="623.5" font-size="10.5" text-anchor="middle" font-weight="bold" fill="#000" >0</text>
<text x="397.25" y="623.5" font-size="10.5" text-anchor="middle" font-weight="bold" fill="#000" >5</text>
<text x="644.0" y="623.5" font-size="10.5" text-anchor="middle" font-weight="bold" fill="#000" >10</text>
<text x="890.75" y="623.5" font-size="10.5" text-anchor="middle" font-weight="bold" fill="#000" >15</text>
<text x="0" y="0" font-size="10" font-weight="bold" text-anchor="middle" transform="translate(120.1,525.5) rotate(-90)">ABS(Range)</text>
<line x1="66.5" y1="246" x2="66.5" y2="400" stroke="#000" stroke-width="1" stroke-dasharray="1,1"/>
<line x1="56.5" y1="246" x2="56.5" y2="400" stroke="#000" stroke-width="1" stroke-dasharray="1,1"/>
<line x1="47.5" y1="246" x2="47.5" y2="400" stroke="#000" stroke-width="1" stroke-dasharray="1,1"/>
<line x1="38.5" y1="246" x2="38.5" y2="400" stroke="#000" stroke-width="1" stroke-dasharray="1,1"/>
<rect x="70.68" y="282.55" width="4.62" height="6.21" fill="#add8e6" stroke="#333" stroke-width="1"/>
<rect x="70.68" y="288.76" width="4.62" height="6.21" fill="#add8e6" stroke="#333" stroke-width="1"/>
<rect x="70.68" y="301.17" width="4.62" height="6.21" fill="#add8e6" stroke="#333" stroke-width="1"/>
<rect x="52.20" y="307.38" width="23.10" height="6.21" fill="#add8e6" stroke="#333" stroke-width="1"/>
<rect x="38.34" y="313.59" width="36.96" height="6.21" fill="#add8e6" stroke="#333" stroke-width="1"/>
<rect x="33.72" y="319.80" width="41.58" height="6.21" fill="#add8e6" stroke="#333" stroke-width="1"/>
<rect x="33.72" y="326.00" width="41.58" height="6.21" fill="#add8e6" stroke="#333" stroke-width="1"/>
<rect x="52.20" y="332.21" width="23.10" height="6.21" fill="#add8e6" stroke="#333" stroke-width="1"/>
<rect x="66.06" y="338.42" width="9.24" height="6.21" fill="#add8e6" stroke="#333" stroke-width="1"/>
<rect x="56.82" y="344.63" width="18.48" height="6.21" fill="#add8e6" stroke="#333" stroke-width="1"/>
<rect x="61.44" y="350.84" width="13.86" height="6.21" fill="#add8e6" stroke="#333" stroke-width="1"/>
<rect x="61.44" y="357.04" width="13.86" height="6.21" fill="#add8e6" stroke="#333" stroke-width="1"/>
<rect x="52.20" y="363.25" width="23.10" height="6.21" fill="#add8e6" stroke="#333" stroke-width="1"/>
<polyline points="75.23,400.50 75.22,399.21 75.20,397.91 75.17,396.62 75.14,395.33 75.10,394.03 75.05,392.74 75.00,391.45 74.93,390.15 74.85,388.86 74.75,387.57 74.64,386.27 74.51,384.98 74.36,383.69 74.18,382.39 73.97,381.10 73.73,379.81 73.46,378.51 73.14,377.22 72.79,375.93 72.39,374.63 71.94,373.34 71.44,372.05 70.88,370.75 70.27,369.46 69.59,368.17 68.86,366.87 68.06,365.58 67.19,364.29 66.26,362.99 65.27,361.70 64.22,360.41 63.12,359.11 61.96,357.82 60.75,356.53 59.51,355.23 58.23,353.94 56.93,352.65 55.62,351.35 54.30,350.06 53.00,348.77 51.71,347.47 50.47,346.18 49.27,344.89 48.13,343.59 47.07,342.30 46.09,341.01 45.21,339.71 44.44,338.42 43.79,337.13 43.26,335.83 42.87,334.54 42.62,333.25 42.50,331.95 42.54,330.66 42.71,329.37 43.02,328.07 43.48,326.78 44.06,325.49 44.76,324.19 45.58,322.90 46.51,321.61 47.52,320.31 48.62,319.02 49.79,317.73 51.01,316.43 52.27,315.14 53.57,313.85 54.88,312.55 56.19,311.26 57.50,309.97 58.79,308.67 60.06,307.38 61.29,306.09 62.47,304.79 63.61,303.50 64.69,302.21 65.72,300.91 66.68,299.62 67.58,298.33 68.42,297.03 69.19,295.74 69.90,294.45 70.55,293.15 71.14,291.86 71.67,290.57 72.14,289.27 72.57,287.98 72.95,286.69 73.29,285.39 73.58,284.10 73.84,282.81 74.06,281.51 74.26,280.22 74.43,278.93 74.57,277.63 74.69,276.34 74.80,275.05 74.89,273.75 74.96,272.46 75.02,271.17 75.07,269.87 75.12,268.58 75.15,267.29 75.18,265.99 75.21,264.70 75.22,263.41 75.24,262.11 75.25,260.82 75.26,259.53 75.27,258.23 75.28,256.94 75.28,255.65 75.29,254.35 75.29,253.06 75.29,251.77 75.29,250.47 75.30,249.18 75.30,247.89 75.30,246.59 75.30,245.30" fill="none" stroke="#008000" stroke-width="2"/>
<line x1="29.1" y1="245.3" x2="75.3" y2="245.3" stroke="#333" stroke-width="1.3"/>
<line x1="29.1" y1="245.3" x2="29.1" y2="412.5" stroke="#333" stroke-width="1.3"/>
<line x1="29.1" y1="400.5" x2="75.3" y2="400.5" stroke="#000" stroke-width="1.5"/>
<line x1="75.30" y1="400.5" x2="75.30" y2="412.5" stroke="#222" stroke-width="1"/>
<line x1="72.99" y1="400.5" x2="72.99" y2="406.5" stroke="#222" stroke-width="1"/>
<line x1="70.68" y1="400.5" x2="70.68" y2="406.5" stroke="#222" stroke-width="1"/>
<line x1="68.37" y1="400.5" x2="68.37" y2="406.5" stroke="#222" stroke-width="1"/>
<line x1="66.06" y1="400.5" x2="66.06" y2="412.5" stroke="#222" stroke-width="1"/>
<line x1="63.75" y1="400.5" x2="63.75" y2="406.5" stroke="#222" stroke-width="1"/>
<line x1="61.44" y1="400.5" x2="61.44" y2="406.5" stroke="#222" stroke-width="1"/>
<line x1="59.13" y1="400.5" x2="59.13" y2="406.5" stroke="#222" stroke-width="1"/>
<line x1="56.82" y1="400.5" x2="56.82" y2="412.5" stroke="#222" stroke-width="1"/>
<line x1="54.51" y1="400.5" x2="54.51" y2="406.5" stroke="#222" stroke-width="1"/>
<line x1="52.20" y1="400.5" x2="52.20" y2="406.5" stroke="#222" stroke-width="1"/>
<line x1="49.89" y1="400.5" x2="49.89" y2="406.5" stroke="#222" stroke-width="1"/>
<line x1="47.58" y1="400.5" x2="47.58" y2="412.5" stroke="#222" stroke-width="1"/>
<line x1="45.27" y1="400.5" x2="45.27" y2="406.5" stroke="#222" stroke-width="1"/>
<line x1="42.96" y1="400.5" x2="42.96" y2="406.5" stroke="#222" stroke-width="1"/>
<line x1="40.65" y1="400.5" x2="40.65" y2="406.5" stroke="#222" stroke-width="1"/>
<line x1="38.34" y1="400.5" x2="38.34" y2="412.5" stroke="#222" stroke-width="1"/>
<line x1="36.03" y1="400.5" x2="36.03" y2="406.5" stroke="#222" stroke-width="1"/>
<line x1="33.72" y1="400.5" x2="33.72" y2="406.5" stroke="#222" stroke-width="1"/>
<line x1="31.41" y1="400.5" x2="31.41" y2="406.5" stroke="#222" stroke-width="1"/>
<line x1="29.10" y1="400.5" x2="29.10" y2="412.5" stroke="#222" stroke-width="1"/>
<text x="38.34" y="422.8" font-size="10.5" text-anchor="middle" font-weight="bold" fill="#000" >8</text>
<text x="47.58" y="422.8" font-size="10.5" text-anchor="middle" font-weight="bold" fill="#000" >6</text>
<text x="56.82" y="422.8" font-size="10.5" text-anchor="middle" font-weight="bold" fill="#000" >4</text>
<text x="66.06" y="422.8" font-size="10.5" text-anchor="middle" font-weight="bold" fill="#000" >2</text>
<text x="75.30" y="422.8" font-size="10.5" text-anchor="middle" font-weight="bold" fill="#000" >0</text>
<line x1="59.5" y1="447" x2="59.5" y2="602" stroke="#000" stroke-width="1" stroke-dasharray="1,1"/>
<line x1="44.5" y1="447" x2="44.5" y2="602" stroke="#000" stroke-width="1" stroke-dasharray="1,1"/>
<rect x="73.76" y="470.08" width="1.54" height="7.76" fill="#add8e6" stroke="#333" stroke-width="1"/>
<rect x="59.90" y="501.12" width="15.40" height="7.76" fill="#add8e6" stroke="#333" stroke-width="1"/>
<rect x="70.68" y="508.88" width="4.62" height="7.76" fill="#add8e6" stroke="#333" stroke-width="1"/>
<rect x="72.22" y="516.64" width="3.08" height="7.76" fill="#add8e6" stroke="#333" stroke-width="1"/>
<rect x="69.14" y="524.40" width="6.16" height="7.76" fill="#add8e6" stroke="#333" stroke-width="1"/>
<rect x="72.22" y="532.16" width="3.08" height="7.76" fill="#add8e6" stroke="#333" stroke-width="1"/>
<rect x="42.96" y="539.92" width="32.34" height="7.76" fill="#add8e6" stroke="#333" stroke-width="1"/>
<rect x="67.60" y="547.68" width="7.70" height="7.76" fill="#add8e6" stroke="#333" stroke-width="1"/>
<rect x="64.52" y="555.44" width="10.78" height="7.76" fill="#add8e6" stroke="#333" stroke-width="1"/>
<polyline points="75.19,602.00 75.17,600.71 75.14,599.41 75.11,598.12 75.08,596.83 75.04,595.53 74.99,594.24 74.94,592.95 74.88,591.65 74.82,590.36 74.74,589.07 74.65,587.77 74.55,586.48 74.45,585.19 74.32,583.89 74.19,582.60 74.04,581.31 73.87,580.01 73.69,578.72 73.49,577.43 73.28,576.13 73.04,574.84 72.79,573.55 72.52,572.25 72.23,570.96 71.92,569.67 71.59,568.37 71.25,567.08 70.89,565.79 70.51,564.49 70.12,563.20 69.71,561.91 69.29,560.61 68.87,559.32 68.44,558.03 68.00,556.73 67.57,555.44 67.13,554.15 66.70,552.85 66.28,551.56 65.87,550.27 65.47,548.97 65.10,547.68 64.74,546.39 64.41,545.09 64.11,543.80 63.84,542.51 63.60,541.21 63.40,539.92 63.24,538.63 63.11,537.33 63.03,536.04 62.99,534.75 62.99,533.45 63.03,532.16 63.11,530.87 63.24,529.57 63.40,528.28 63.60,526.99 63.84,525.69 64.11,524.40 64.41,523.11 64.74,521.81 65.10,520.52 65.47,519.23 65.87,517.93 66.28,516.64 66.70,515.35 67.13,514.05 67.57,512.76 68.00,511.47 68.44,510.17 68.87,508.88 69.29,507.59 69.71,506.29 70.12,505.00 70.51,503.71 70.89,502.41 71.25,501.12 71.59,499.83 71.92,498.53 72.23,497.24 72.52,495.95 72.79,494.65 73.04,493.36 73.28,492.07 73.49,490.77 73.69,489.48 73.87,488.19 74.04,486.89 74.19,485.60 74.32,484.31 74.45,483.01 74.55,481.72 74.65,480.43 74.74,479.13 74.82,477.84 74.88,476.55 74.94,475.25 74.99,473.96 75.04,472.67 75.08,471.37 75.11,470.08 75.14,468.79 75.17,467.49 75.19,466.20 75.21,464.91 75.22,463.61 75.24,462.32 75.25,461.03 75.26,459.73 75.26,458.44 75.27,457.15 75.28,455.85 75.28,454.56 75.28,453.27 75.29,451.97 75.29,450.68 75.29,449.39 75.29,448.09 75.29,446.80" fill="none" stroke="#008000" stroke-width="2"/>
<line x1="29.1" y1="446.80000000000007" x2="75.3" y2="446.80000000000007" stroke="#333" stroke-width="1.3"/>
<line x1="29.1" y1="446.80000000000007" x2="29.1" y2="614.0" stroke="#333" stroke-width="1.3"/>
<line x1="29.1" y1="602.0" x2="75.3" y2="602.0" stroke="#000" stroke-width="1.5"/>
<line x1="75.30" y1="602.0" x2="75.30" y2="614.0" stroke="#222" stroke-width="1"/>
<line x1="72.22" y1="602.0" x2="72.22" y2="608.0" stroke="#222" stroke-width="1"/>
<line x1="69.14" y1="602.0" x2="69.14" y2="608.0" stroke="#222" stroke-width="1"/>
<line x1="66.06" y1="602.0" x2="66.06" y2="608.0" stroke="#222" stroke-width="1"/>
<line x1="62.98" y1="602.0" x2="62.98" y2="608.0" stroke="#222" stroke-width="1"/>
<line x1="59.90" y1="602.0" x2="59.90" y2="614.0" stroke="#222" stroke-width="1"/>
<line x1="56.82" y1="602.0" x2="56.82" y2="608.0" stroke="#222" stroke-width="1"/>
<line x1="53.74" y1="602.0" x2="53.74" y2="608.0" stroke="#222" stroke-width="1"/>
<line x1="50.66" y1="602.0" x2="50.66" y2="608.0" stroke="#222" stroke-width="1"/>
<line x1="47.58" y1="602.0" x2="47.58" y2="608.0" stroke="#222" stroke-width="1"/>
<line x1="44.50" y1="602.0" x2="44.50" y2="614.0" stroke="#222" stroke-width="1"/>
<line x1="41.42" y1="602.0" x2="41.42" y2="608.0" stroke="#222" stroke-width="1"/>
<line x1="38.34" y1="602.0" x2="38.34" y2="608.0" stroke="#222" stroke-width="1"/>
<line x1="35.26" y1="602.0" x2="35.26" y2="608.0" stroke="#222" stroke-width="1"/>
<line x1="32.18" y1="602.0" x2="32.18" y2="608.0" stroke="#222" stroke-width="1"/>
<line x1="29.10" y1="602.0" x2="29.10" y2="614.0" stroke="#222" stroke-width="1"/>
<text x="29.10" y="623.5" font-size="10.5" text-anchor="middle" font-weight="bold" fill="#000" >30</text>
<text x="44.50" y="623.5" font-size="10.5" text-anchor="middle" font-weight="bold" fill="#000" >20</text>
<text x="59.90" y="623.5" font-size="10.5" text-anchor="middle" font-weight="bold" fill="#000" >10</text>
<text x="75.30" y="623.5" font-size="10.5" text-anchor="middle" font-weight="bold" fill="#000" >0</text>
<rect x="359" y="101" width="150" height="99" fill="#d4d0c8"/>
<rect x="359" y="101" width="149" height="98" fill="#404040"/>
<rect x="360" y="102" width="148" height="97" fill="#ffffe1"/>
<text x="364.7" y="113.5" font-size="11" text-anchor="start" font-weight="normal" fill="#000" >8/4/2012 9:47:48 PM</text>
<text x="364.7" y="125.8" font-size="11" text-anchor="start" font-weight="normal" fill="#000" >Secondary chart: Hughes</text>
<text x="364.7" y="138.1" font-size="11" text-anchor="start" font-weight="normal" fill="#000" >Rule #9 violation 4 of 5 less</text>
<text x="364.7" y="150.4" font-size="11" text-anchor="start" font-weight="normal" fill="#000" >than -1-sigma=0.184</text>
<text x="364.7" y="162.7" font-size="11" text-anchor="start" font-weight="normal" fill="#000" >Current Value=0.036</text>
<rect x="7" y="665" width="1157" height="16" fill="#eae8e3"/>
<rect x="7" y="665" width="15" height="16" fill="#404040"/>
<rect x="7" y="665" width="14" height="15" fill="#ffffff"/>
<rect x="8" y="666" width="13" height="14" fill="#808080"/>
<rect x="8" y="666" width="12" height="13" fill="#d4d0c8"/>
<rect x="22" y="665" width="8" height="16" fill="#404040"/>
<rect x="22" y="665" width="7" height="15" fill="#ffffff"/>
<rect x="23" y="666" width="6" height="14" fill="#808080"/>
<rect x="23" y="666" width="5" height="13" fill="#d4d0c8"/>
<rect x="1148" y="665" width="16" height="16" fill="#404040"/>
<rect x="1148" y="665" width="15" height="15" fill="#ffffff"/>
<rect x="1149" y="666" width="14" height="14" fill="#808080"/>
<rect x="1149" y="666" width="13" height="13" fill="#d4d0c8"/>
<path d="M12 673 L16 669 L16 677 Z" fill="#000"/>
<path d="M1158.5 673 L1154.5 669 L1154.5 677 Z" fill="#000"/>
</svg></body></html>
